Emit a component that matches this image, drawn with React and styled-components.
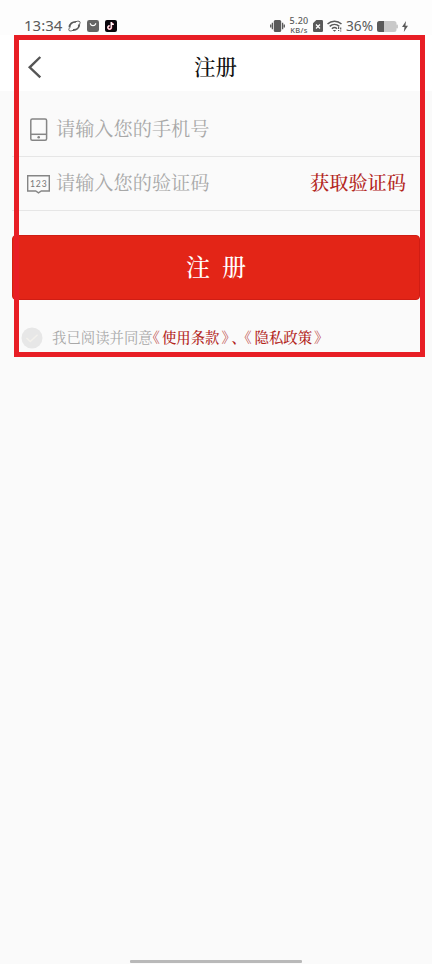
import React from "react";
import styled, { createGlobalStyle } from "styled-components";

const Colors = {
  Primary: "#e32517",
  PrimaryDark: "#d01d14",
  Link: "#b3261c",
  Frame: "#e81e25",
  Placeholder: "#a8a8a8",
  Status: "#5a5a5a",
  Line: "#e6e6e6"
};

const GlobalStyle = createGlobalStyle`
  * {
    box-sizing: border-box;
  }

  body {
    margin: 0;
    background: #fafafa;
    font-family: "Noto Serif CJK SC", "Noto Sans CJK SC", serif;
  }
`;

const Screen = styled.div`
  position: relative;
  width: 432px;
  height: 964px;
  display: flex;
  flex-direction: column;
  overflow: hidden;
  background: #fafafa;
`;

const StatusBar = styled.div`
  height: 35px;
  padding: 16px 24px 0;
  display: flex;
  align-items: flex-start;
  justify-content: space-between;
  background: #fdfdfd;
  color: ${Colors.Status};
  font-family: "Noto Sans", sans-serif;
`;

const StatusGroup = styled.div`
  height: 20px;
  display: flex;
  align-items: center;
  gap: ${p => p.$gap}px;
`;

const Clock = styled.span`
  width: 39px;
  margin: -2px -1px 0 0;
  font-size: 15px;
  line-height: 18px;
  white-space: nowrap;
`;

const Speed = styled.div`
  width: 20px;
  height: 18px;
  margin-top: -2px;
  display: flex;
  flex-direction: column;
  align-items: center;
  justify-content: space-between;
  font-size: 9px;
  font-weight: 500;
  line-height: 9px;
  letter-spacing: 0.3px;
`;

const SpeedUnit = styled.span`
  font-size: 7.5px;
  line-height: 8px;
`;

const Percent = styled.span`
  width: 27px;
  font-size: 13.7px;
  line-height: 18px;
`;

const TitleBar = styled.header`
  height: 56px;
  padding: 0 24px 0 27px;
  display: grid;
  grid-template-columns: 20px 1fr 23px;
  align-items: center;
  background: #ffffff;
`;

const Title = styled.h1`
  margin: 0 0 0 -1px;
  padding-top: 5px;
  font-size: 21.5px;
  font-weight: 500;
  line-height: 32px;
  text-align: center;
  color: #111111;
`;

const BackIcon = styled.svg`
  margin: 7px 0 0;
`;

const Form = styled.main`
  width: 408px;
  margin-left: 12px;
  display: flex;
  flex-direction: column;
`;

const Field = styled.div`
  height: ${p => p.$height}px;
  padding: ${p => p.$top}px 14px 0 14px;
  display: flex;
  align-items: center;
  border-bottom: 1px solid ${Colors.Line};
`;

const FieldIcon = styled.svg`
  width: 25px;
  height: 26px;
  margin-right: 5px;
  flex: none;
`;

const Placeholder = styled.span`
  flex: 1;
  margin-top: -3px;
  font-size: 19.2px;
  line-height: 28px;
  color: ${Colors.Placeholder};
`;

const CodeLink = styled.span`
  margin-top: -3px;
  font-size: 19.2px;
  font-weight: 500;
  line-height: 28px;
  color: ${Colors.Link};
`;

const Submit = styled.button`
  height: 65px;
  margin-top: 24px;
  padding: 0 0 5px;
  display: flex;
  align-items: center;
  justify-content: center;
  gap: 12px;
  border: 1px solid ${Colors.PrimaryDark};
  border-radius: 4px;
  background: ${Colors.Primary};
  color: #ffffff;
  font-family: inherit;
  font-size: 24px;
  font-weight: 500;
`;

const Agreement = styled.div`
  height: 24px;
  margin: 26px 0 0 9px;
  display: flex;
  align-items: center;
  font-size: 14.4px;
  line-height: 24px;
  color: ${Colors.Placeholder};
  white-space: nowrap;
`;

const AgreementText = styled.div`
  display: flex;
  margin-top: -2px;
`;

const CheckIcon = styled.svg`
  margin-right: 9px;
  flex: none;
`;

const TermLink = styled.span`
  font-weight: 500;
  color: ${Colors.Link};
`;

// halt sets the full-width brackets on half an em
const Mark = styled.span`
  width: ${p => p.$width}px;
  padding-left: ${p => p.$indent || 0}px;
  display: flex;
  color: ${Colors.Link};
  font-weight: ${p => p.$weight || 400};
  font-feature-settings: "halt";
`;

const Frame = styled.div`
  position: absolute;
  left: 14px;
  top: 35px;
  width: 411px;
  height: 322px;
  border: 5px solid ${Colors.Frame};
  pointer-events: none;
`;

const HomeIndicator = styled.div`
  width: 172px;
  height: 3px;
  margin: auto auto 1px 130px;
  border-radius: 1px;
  background: #b9b9b9;
`;

const PlanetIcon = () => (
  <svg width="13" height="14" viewBox="0 0 13 14" fill="none" stroke={Colors.Status}>
    <path d="M1.5 8.3C1.7 5 4.3 2.8 8 2.9M11.3 5.5C11.1 8.9 8.4 11.2 5 11" strokeWidth="1.9" />
    <path d="M8 2.6C10 1.9 12.3 2 12.1 3.6C12 4.6 11.3 5.6 10.3 6.6M5 11.3C3.3 12.1 1 12.3 .8 11C.7 10.2 1.2 9.2 2 8.3" strokeWidth="1" />
  </svg>
);

const BagIcon = () => (
  <svg width="12" height="12" viewBox="0 0 12 12">
    <rect width="12" height="12" rx="2.3" fill="#656565" />
    <path d="M3.3 3.7C4.2 6.3 7.8 6.3 8.7 3.7" fill="none" stroke="#fff" strokeWidth="1.2" strokeLinecap="round" />
  </svg>
);

const NoteIcon = () => (
  <svg width="12" height="12" viewBox="0 0 12 12" fill="none">
    <rect width="12" height="12" rx="2" fill="#09070c" />
    <path d="M6.5 2V7.5A1.7 1.7 0 1 1 4.8 5.9M6.5 2.2C6.8 3.7 7.7 4.4 9 4.5" stroke="#e84663" strokeWidth="1.5" />
    <path d="M6.2 2V7.3A1.7 1.7 0 1 1 4.5 5.7M6.2 2.2C6.5 3.5 7.4 4.2 8.7 4.3" stroke="#fff" strokeWidth="1.2" />
  </svg>
);

const VibrateIcon = () => (
  <svg width="15" height="14" viewBox="0 0 15 14">
    <rect x="3.8" y="1" width="7.4" height="12" rx="1.5" fill={Colors.Status} />
    <path d="M2.4 3.7V10.3M12.6 3.7V10.3M.7 5.5V8.5M14.3 5.5V8.5" stroke={Colors.Status} strokeWidth="1.3" />
  </svg>
);

const SimIcon = () => (
  <svg width="10" height="12" viewBox="0 0 10 12">
    <path d="M3.3 0H8.7Q10 0 10 1.3V10.7Q10 12 8.7 12H1.3Q0 12 0 10.7V3.3Z" fill={Colors.Status} />
    <path d="M3 4.5L7 8.5M7 4.5L3 8.5" stroke="#fff" strokeWidth="1.3" />
  </svg>
);

const WifiIcon = () => (
  <svg width="15" height="12" viewBox="0 0 15 12" fill="none" stroke={Colors.Status} strokeWidth="1.5">
    <path d="M.5 4C4.5.2 10.5.2 14.5 4M2.7 6.4C5.5 3.9 9.5 3.9 12.3 6.4M4.9 8.7C6.5 7.3 8.5 7.3 10 8.7" />
    <path d="M5.8 10L7.5 11.8L9.2 10Z" fill={Colors.Status} stroke="none" />
    <path d="M11.6 7V11M13.7 7.5V11.5" strokeWidth="1.2" strokeDasharray="2 1" />
  </svg>
);

const BatteryIcon = () => (
  <svg width="21" height="11" viewBox="0 0 21 11">
    <rect width="19.5" height="11" rx="2.5" fill="#c9c9c9" />
    <path d="M2.5 0H7V11H2.5Q0 11 0 8.5V2.5Q0 0 2.5 0Z" fill={Colors.Status} />
    <rect x="19" y="3.5" width="2" height="4" rx="1" fill="#c9c9c9" />
  </svg>
);

const BoltIcon = () => (
  <svg width="6" height="11" viewBox="0 0 6 11">
    <path d="M4 0L0 6H2.5L1.8 11L6 4.8H3.4Z" fill={Colors.Status} />
  </svg>
);

const App = () => {
  return (
    <>
      <GlobalStyle />
      <Screen>
        <StatusBar>
          <StatusGroup $gap={6}>
            <Clock>13:34</Clock>
            <PlanetIcon />
            <BagIcon />
            <NoteIcon />
          </StatusGroup>
          <StatusGroup $gap={4}>
            <VibrateIcon />
            <Speed>
              <span>5.20</span>
              <SpeedUnit>KB/s</SpeedUnit>
            </Speed>
            <SimIcon />
            <WifiIcon />
            <Percent>36%</Percent>
            <BatteryIcon />
            <BoltIcon />
          </StatusGroup>
        </StatusBar>

        <TitleBar>
          <BackIcon width="16" height="24" viewBox="0 0 16 24" fill="none">
            <path d="M13.3 2L2.7 12.3L13.3 22.4" stroke="#555555" strokeWidth="2.4" />
          </BackIcon>
          <Title>注册</Title>
        </TitleBar>

        <Form>
          <Field $height={66} $top={12}>
            <FieldIcon viewBox="0 0 25 26" fill="none" stroke="#858585" strokeWidth="1.5">
              <rect x="4.8" y="2" width="15.8" height="21.3" rx="1.5" />
              <path d="M5 17.3H20.5" />
              <circle cx="12.7" cy="20.3" r="1.3" fill="#858585" stroke="none" />
            </FieldIcon>
            <Placeholder>请输入您的手机号</Placeholder>
          </Field>
          <Field $height={54} $top={0}>
            <FieldIcon viewBox="0 0 25 26" fill="none" stroke="#858585" strokeWidth="1.4">
              <path d="M1.7 4.7H23.3V20H15.3L12.5 21.8L9.7 20H1.7Z" />
              <text
                x="12.8"
                y="15.5"
                fill="#777777"
                stroke="none"
                fontFamily="Lato, sans-serif"
                fontSize="8.6"
                fontWeight="400"
                letterSpacing=".9"
                textAnchor="middle"
              >
                123
              </text>
            </FieldIcon>
            <Placeholder>请输入您的验证码</Placeholder>
            <CodeLink>获取验证码</CodeLink>
          </Field>

          <Submit>
            <span>注</span>
            <span>册</span>
          </Submit>

          <Agreement>
            <CheckIcon width="22" height="22" viewBox="0 0 22 22" fill="none">
              <circle cx="11" cy="11" r="10.5" fill="#e7e7e7" />
              <path d="M5.5 11L9.3 14.5L16.5 7.8" stroke="#f3f1ec" strokeWidth="1.4" />
            </CheckIcon>
            <AgreementText>
              <span>我已阅读并同意</span>
              <Mark $width={9.2}>《</Mark>
              <TermLink>使用条款</TermLink>
              <Mark $width={12} $indent={2}>》</Mark>
              <Mark $width={10} $weight={600}>、</Mark>
              <Mark $width={13} $indent={3}>《</Mark>
              <TermLink>隐私政策</TermLink>
              <Mark $width={12} $indent={2}>》</Mark>
            </AgreementText>
          </Agreement>
        </Form>

        <HomeIndicator />
        <Frame />
      </Screen>
    </>
  );
};

export default App;
